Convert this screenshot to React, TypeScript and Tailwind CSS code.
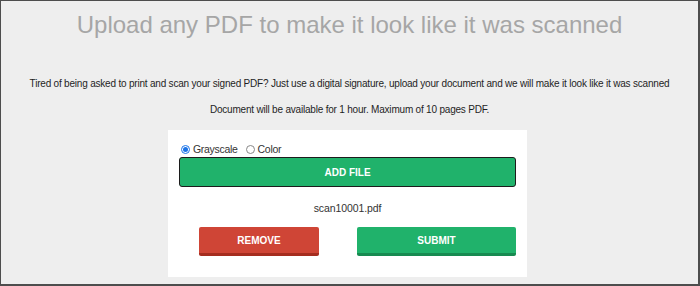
import React from "react";

export default function App() {
  return (
    <div
      className="w-[700px] h-[286px] bg-[#eeeeee] border-t border-l border-r-2 border-b-2 border-[#4d4d4d] flex flex-col items-center overflow-hidden"
      style={{ fontFamily: '"Liberation Sans", Arial, sans-serif' }}
    >
      <h1 className="mt-[10px] text-[24px] leading-[28px] text-[#a6a6a6] font-normal whitespace-nowrap">
        Upload any PDF to make it look like it was scanned
      </h1>
      <p className="mt-[38px] text-[10px] leading-[14px] text-[#1e1e1e] tracking-[-0.2px] whitespace-nowrap">
        Tired of being asked to print and scan your signed PDF? Just use a digital signature, upload your document and we will make it look like it was scanned
      </p>
      <p className="mt-[12px] text-[10px] leading-[14px] text-[#1e1e1e] tracking-[-0.2px] whitespace-nowrap">
        Document will be available for 1 hour. Maximum of 10 pages PDF.
      </p>
      <div className="mt-[13px] mr-[4px] w-[359px] h-[147px] shrink-0 bg-white pt-[13px] px-[11px] flex flex-col">
        <div className="flex items-center h-[12px] text-[10.5px] leading-[12px] text-[#333] tracking-[-0.3px]">
          <span className="ml-[2px] w-[9px] h-[9px] rounded-full border border-[#1a73e8] flex items-center justify-center shrink-0">
            <span className="w-[5px] h-[5px] rounded-full bg-[#1a73e8]" />
          </span>
          <span className="ml-[3px]">Grayscale</span>
          <span className="ml-[8px] w-[9px] h-[9px] rounded-full border border-[#888] shrink-0" />
          <span className="ml-[3px]">Color</span>
        </div>
        <button className="mt-[2px] h-[30px] w-full rounded-[3px] border-[1.5px] border-[#1c1c1c] bg-[#20b26b] text-white font-bold text-[10px] shrink-0">
          ADD FILE
        </button>
        <div className="mt-[14px] text-center text-[10.5px] text-[#333] leading-[14px] tracking-[-0.1px]">scan10001.pdf</div>
        <div className="mt-[12px] flex">
          <button className="ml-[20px] w-[120px] h-[29px] rounded-[2px] bg-[#cf4536] border-b-[3px] border-[#a52d1f] text-white font-bold text-[10px]">
            REMOVE
          </button>
          <button className="ml-[38px] w-[159px] h-[29px] rounded-[2px] bg-[#20b26b] border-b-[3px] border-[#178a50] text-white font-bold text-[10px]">
            SUBMIT
          </button>
        </div>
      </div>
    </div>
  );
}
